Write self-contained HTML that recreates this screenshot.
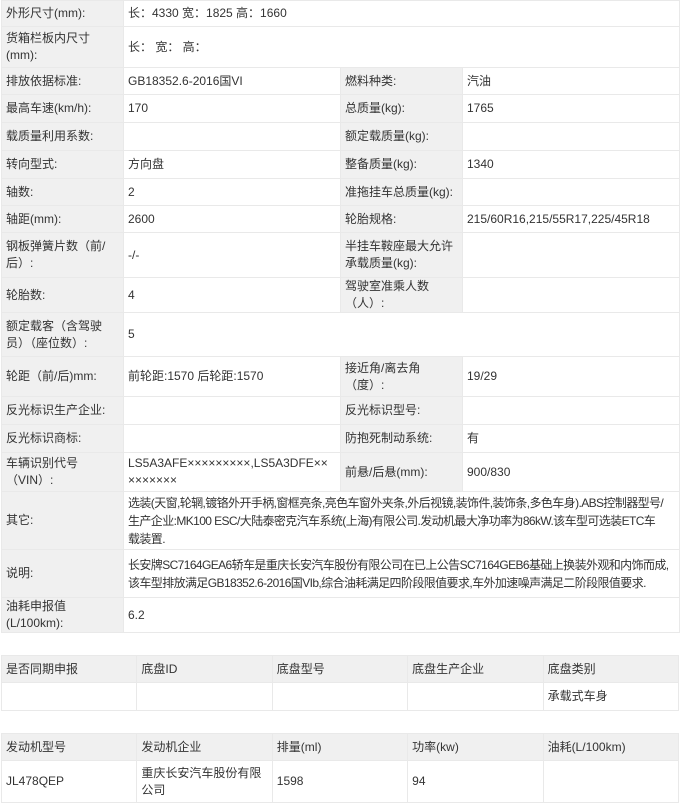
<!DOCTYPE html>
<html><head><meta charset="utf-8"><style>
*{margin:0;padding:0;box-sizing:border-box}
body{width:680px;height:807px;background:#fff;font-family:"Liberation Sans","Noto Sans CJK SC",sans-serif;font-size:12px;color:#333;overflow:hidden;position:relative}
table{border-collapse:collapse;position:absolute;left:1px;width:678px;table-layout:fixed}
td{border:1px solid #e9e9e9;padding:0 4px;line-height:17px;vertical-align:middle;background:#fff}
td.l{background:#f0f0f0}
.t{letter-spacing:-0.6px;padding-right:0;line-height:18px}
</style></head><body>
<table style="top:0">
<colgroup><col style="width:122px"><col style="width:217px"><col style="width:122px"><col style="width:217px"></colgroup>
<tr style="height:26px"><td class="l">外形尺寸(mm):</td><td colspan="3">长：4330 宽：1825 高：1660</td></tr>
<tr style="height:41px"><td class="l">货箱栏板内尺寸(mm):</td><td colspan="3">长： 宽： 高：</td></tr>
<tr style="height:27px"><td class="l">排放依据标准:</td><td>GB18352.6-2016国VI</td><td class="l">燃料种类:</td><td>汽油</td></tr>
<tr style="height:28px"><td class="l">最高车速(km/h):</td><td>170</td><td class="l">总质量(kg):</td><td>1765</td></tr>
<tr style="height:28px"><td class="l">载质量利用系数:</td><td></td><td class="l">额定载质量(kg):</td><td></td></tr>
<tr style="height:28px"><td class="l">转向型式:</td><td>方向盘</td><td class="l">整备质量(kg):</td><td>1340</td></tr>
<tr style="height:27px"><td class="l">轴数:</td><td>2</td><td class="l">准拖挂车总质量(kg):</td><td></td></tr>
<tr style="height:27px"><td class="l">轴距(mm):</td><td>2600</td><td class="l">轮胎规格:</td><td>215/60R16,215/55R17,225/45R18</td></tr>
<tr style="height:45px"><td class="l">钢板弹簧片数（前/后）:</td><td>-/-</td><td class="l">半挂车鞍座最大允许承载质量(kg):</td><td></td></tr>
<tr style="height:35px"><td class="l">轮胎数:</td><td>4</td><td class="l">驾驶室准乘人数（人）:</td><td></td></tr>
<tr style="height:44px"><td class="l">额定载客（含驾驶员）（座位数）:</td><td colspan="3">5</td></tr>
<tr style="height:40px"><td class="l">轮距（前/后)mm:</td><td>前轮距:1570 后轮距:1570</td><td class="l">接近角/离去角（度）:</td><td>19/29</td></tr>
<tr style="height:28px"><td class="l">反光标识生产企业:</td><td></td><td class="l">反光标识型号:</td><td></td></tr>
<tr style="height:28px"><td class="l">反光标识商标:</td><td></td><td class="l">防抱死制动系统:</td><td>有</td></tr>
<tr style="height:39px"><td class="l">车辆识别代号（VIN）:</td><td style="word-break:break-all">LS5A3AFE×××××××××,LS5A3DFE×× ×××××××</td><td class="l">前悬/后悬(mm):</td><td>900/830</td></tr>
<tr style="height:58px"><td class="l">其它:</td><td colspan="3" class="t">选装(天窗,轮辋,镀铬外开手柄,窗框亮条,亮色车窗外夹条,外后视镜,装饰件,装饰条,多色车身).ABS控制器型号/<br>生产企业:MK100 ESC/大陆泰密克汽车系统(上海)有限公司.发动机最大净功率为86kW.该车型可选装ETC车<br>载装置.</td></tr>
<tr style="height:48px"><td class="l">说明:</td><td colspan="3" class="t" style="white-space:nowrap">长安牌SC7164GEA6轿车是重庆长安汽车股份有限公司在已上公告SC7164GEB6基础上换装外观和内饰而成,<br>该车型排放满足GB18352.6-2016国VIb,综合油耗满足四阶段限值要求,车外加速噪声满足二阶段限值要求.</td></tr>
<tr style="height:35px"><td class="l">油耗申报值(L/100km):</td><td colspan="3">6.2</td></tr>
</table>
<table style="top:655px">
<tr style="height:27px"><td class="l">是否同期申报</td><td class="l">底盘ID</td><td class="l">底盘型号</td><td class="l">底盘生产企业</td><td class="l">底盘类别</td></tr>
<tr style="height:28px"><td></td><td></td><td></td><td></td><td>承载式车身</td></tr>
</table>
<table style="top:733px">
<tr style="height:27px"><td class="l">发动机型号</td><td class="l">发动机企业</td><td class="l">排量(ml)</td><td class="l">功率(kw)</td><td class="l">油耗(L/100km)</td></tr>
<tr style="height:42px"><td>JL478QEP</td><td>重庆长安汽车股份有限公司</td><td>1598</td><td>94</td><td></td></tr>
</table>
</body></html>
